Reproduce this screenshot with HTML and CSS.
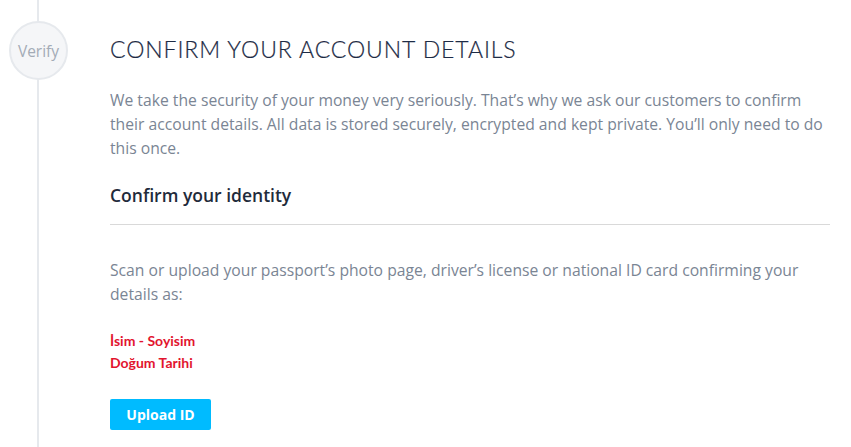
FILE: index.html
```html
<!DOCTYPE html>
<html lang="en">
<head>
  <meta charset="UTF-8" />
  <title>Verify</title>
  <link rel="stylesheet" href="styles.css">
</head>
<body>
  <div class="step">
    <div class="rail">
      <div class="badge">Verify</div>
    </div>

    <div class="content">
      <h1>Confirm your account details</h1>
      <p class="lead">We take the security of your money very seriously. That’s why we ask our customers to confirm their account details. All data is stored securely, encrypted and kept private. You’ll only need to do this once.</p>

      <h2>Confirm your identity</h2>

      <p class="lead scan">Scan or upload your passport’s photo page, driver’s license or national ID card confirming your details as:</p>

      <div class="required">
        <div>İsim - Soyisim</div>
        <div>Doğum Tarihi</div>
      </div>

      <button class="btn">Upload ID</button>
    </div>
  </div>
</body>
</html>
```

FILE: styles.css
```css
* {
  margin: 0;
  padding: 0;
  box-sizing: border-box;
}

body {
  background: #fff;
  font-family: 'Open Sans', sans-serif;
  width: 851px;
  height: 447px;
  overflow: hidden;
}

.step {
  display: flex;
  height: 447px;
}

.rail {
  position: relative;
  width: 110px;
  flex-shrink: 0;
}

.rail::before {
  content: "";
  position: absolute;
  left: 37px;
  top: 0;
  bottom: 0;
  width: 2px;
  background: #e6e9ed;
}

.badge {
  position: absolute;
  left: 9px;
  top: 21px;
  width: 59px;
  height: 59px;
  border-radius: 50%;
  border: 2px solid #e6e9ed;
  background: #f5f6f8;
  color: #a3abb6;
  font-size: 15.5px;
  display: flex;
  align-items: center;
  justify-content: center;
}

.content {
  width: 720px;
  padding-top: 35px;
}

h1 {
  font-family: 'Lato', sans-serif;
  font-weight: 300;
  font-size: 23px;
  text-transform: uppercase;
  color: #1d2b45;
  letter-spacing: 0.9px;
  line-height: 28px;
  margin-bottom: 25px;
  -webkit-text-stroke: 0.2px #1d2b45;
}

.lead {
  font-size: 15.7px;
  line-height: 24px;
  color: #7a8594;
}

h2 {
  font-size: 17.5px;
  font-weight: 600;
  color: #1f2b3b;
  line-height: 24px;
  margin-top: 23px;
  padding-bottom: 17px;
  border-bottom: 1px solid #d9d9d9;
}

.scan {
  margin-top: 33px;
}

.required {
  margin-top: 24px;
  color: #e2142e;
  font-family: 'Lato', sans-serif;
  font-weight: 700;
  font-size: 14px;
  line-height: 22px;
}

.btn {
  display: block;
  margin-top: 25px;
  width: 101px;
  height: 31px;
  border: none;
  border-radius: 2px;
  background: #00bbff;
  color: #fff;
  font-family: 'Open Sans', sans-serif;
  font-weight: 700;
  font-size: 14px;
}
```
